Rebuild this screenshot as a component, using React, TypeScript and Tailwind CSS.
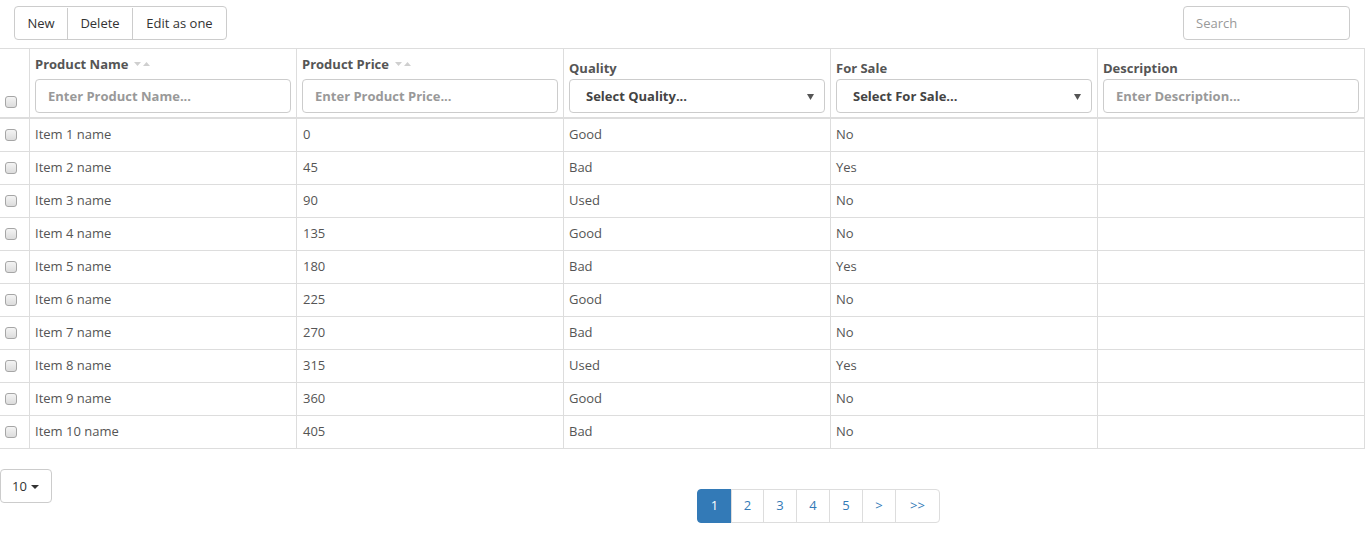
import React from "react";

type Row = { name: string; price: number; quality: string; forSale: string };

const rows: Row[] = [
  { name: "Item 1 name", price: 0, quality: "Good", forSale: "No" },
  { name: "Item 2 name", price: 45, quality: "Bad", forSale: "Yes" },
  { name: "Item 3 name", price: 90, quality: "Used", forSale: "No" },
  { name: "Item 4 name", price: 135, quality: "Good", forSale: "No" },
  { name: "Item 5 name", price: 180, quality: "Bad", forSale: "Yes" },
  { name: "Item 6 name", price: 225, quality: "Good", forSale: "No" },
  { name: "Item 7 name", price: 270, quality: "Bad", forSale: "No" },
  { name: "Item 8 name", price: 315, quality: "Used", forSale: "Yes" },
  { name: "Item 9 name", price: 360, quality: "Good", forSale: "No" },
  { name: "Item 10 name", price: 405, quality: "Bad", forSale: "No" },
];

function Check() {
  return (
    <span className="block h-[12px] w-[12px] rounded-[3px] border border-[#a6a6a6] bg-gradient-to-b from-[#f4f4f4] to-[#dcdcdc]" />
  );
}

function SortCaret() {
  return (
    <svg width="17" height="6" viewBox="0 0 17 6" className="ml-[6px] inline-block">
      <path d="M0 1 L7 1 L3.5 5 Z" fill="#cfcfcf" />
      <path d="M9 5 L16 5 L12.5 1 Z" fill="#cfcfcf" />
    </svg>
  );
}

function TextFilter({ placeholder }: { placeholder: string }) {
  return (
    <div className="flex h-[34px] items-center rounded-[4px] border border-[#ccc] bg-white pl-[12px] pt-[1px] text-[13px] font-bold text-[#999]">
      {placeholder}
    </div>
  );
}

function SelectFilter({ label }: { label: string }) {
  return (
    <div className="flex h-[34px] items-center justify-between rounded-[4px] border border-[#ccc] bg-white pl-[16px] pr-[10px] pt-[1px] text-[13px] font-bold text-[#444]">
      <span>{label}</span>
      <svg width="7" height="6" viewBox="0 0 7 6">
        <path d="M0 0 L7 0 L3.5 6 Z" fill="#555" />
      </svg>
    </div>
  );
}

function HeadCell({
  title,
  sortable,
  children,
}: {
  title: string;
  sortable?: boolean;
  children: React.ReactNode;
}) {
  return (
    <div className="flex h-[70px] flex-col justify-end border-r border-b-2 border-[#ddd] px-[5px] pb-[4px]">
      <div
        className={`flex items-center text-[13px] font-bold leading-[18px] text-[#555] ${
          sortable ? "mb-[6px]" : "mb-[2px]"
        }`}
      >
        {title}
        {sortable && <SortCaret />}
      </div>
      {children}
    </div>
  );
}

export default function App() {
  return (
    <div className="min-h-[545px] w-[1365px] bg-white text-[13px] text-[#555]" style={{ fontFamily: '"Open Sans", "Liberation Sans", sans-serif' }}>
      <div className="flex items-start justify-between pt-[6px]">
        <div className="ml-[14px] flex h-[34px] rounded-[4px] border border-[#ccc] pt-[1px] text-[13px] text-[#333]">
          <div className="flex w-[53px] items-center justify-center border-r border-[#ccc]">New</div>
          <div className="flex w-[65px] items-center justify-center border-r border-[#ccc]">Delete</div>
          <div className="flex w-[93px] items-center justify-center">Edit as one</div>
        </div>
        <div className="mr-[15px] flex h-[34px] w-[167px] items-center rounded-[4px] border border-[#ccc] pl-[12px] pt-[2px] text-[13px] text-[#999]">
          Search
        </div>
      </div>

      <div className="mt-[8px] grid grid-cols-[30px_repeat(5,267px)] border-t border-[#ddd]">
        <div className="flex h-[70px] items-end border-r border-b-2 border-[#ddd] pb-[9px] pl-[5px]">
          <Check />
        </div>
        <HeadCell title="Product Name" sortable>
          <TextFilter placeholder="Enter Product Name..." />
        </HeadCell>
        <HeadCell title="Product Price" sortable>
          <TextFilter placeholder="Enter Product Price..." />
        </HeadCell>
        <HeadCell title="Quality">
          <SelectFilter label="Select Quality..." />
        </HeadCell>
        <HeadCell title="For Sale">
          <SelectFilter label="Select For Sale..." />
        </HeadCell>
        <HeadCell title="Description">
          <TextFilter placeholder="Enter Description..." />
        </HeadCell>

        {rows.map((r) => (
          <React.Fragment key={r.name}>
            <div className="flex h-[33px] items-center border-r border-b border-[#ddd] pl-[5px]">
              <Check />
            </div>
            <div className="flex h-[33px] items-center border-r border-b border-[#ddd] px-[5px]">{r.name}</div>
            <div className="flex h-[33px] items-center border-r border-b border-[#ddd] px-[6px]">{r.price}</div>
            <div className="flex h-[33px] items-center border-r border-b border-[#ddd] px-[5px]">{r.quality}</div>
            <div className="flex h-[33px] items-center border-r border-b border-[#ddd] px-[5px]">{r.forSale}</div>
            <div className="h-[33px] border-r border-b border-[#ddd]" />
          </React.Fragment>
        ))}
      </div>

      <div className="flex">
        <div className="w-[682px] pt-[20px]">
          <div className="flex h-[34px] w-[52px] items-center rounded-[4px] border border-[#ccc] pl-[11px] pt-[1px] text-[13px] text-[#333]">
            10
            <svg width="8" height="4" viewBox="0 0 8 4" className="ml-[4px]">
              <path d="M0 0 L8 0 L4 4 Z" fill="#333" />
            </svg>
          </div>
        </div>
        <div className="pl-[15px] pt-[40px]">
          <div className="flex h-[34px] text-[13px] text-[#337ab7]">
            <div className="flex w-[35px] items-center justify-center rounded-l-[4px] border border-[#337ab7] bg-[#337ab7] text-white">1</div>
            {["2", "3", "4", "5"].map((p, i) => (
              <div
                key={p}
                className={`-ml-px flex items-center justify-center border border-[#ddd] ${i === 0 ? "w-[33px]" : "w-[34px]"}`}
              >
                {p}
              </div>
            ))}
            <div className="-ml-px flex w-[34px] items-center justify-center border border-[#ddd]">&gt;</div>
            <div className="-ml-px flex w-[45px] items-center justify-center rounded-r-[4px] border border-[#ddd]">&gt;&gt;</div>
          </div>
        </div>
      </div>
    </div>
  );
}
